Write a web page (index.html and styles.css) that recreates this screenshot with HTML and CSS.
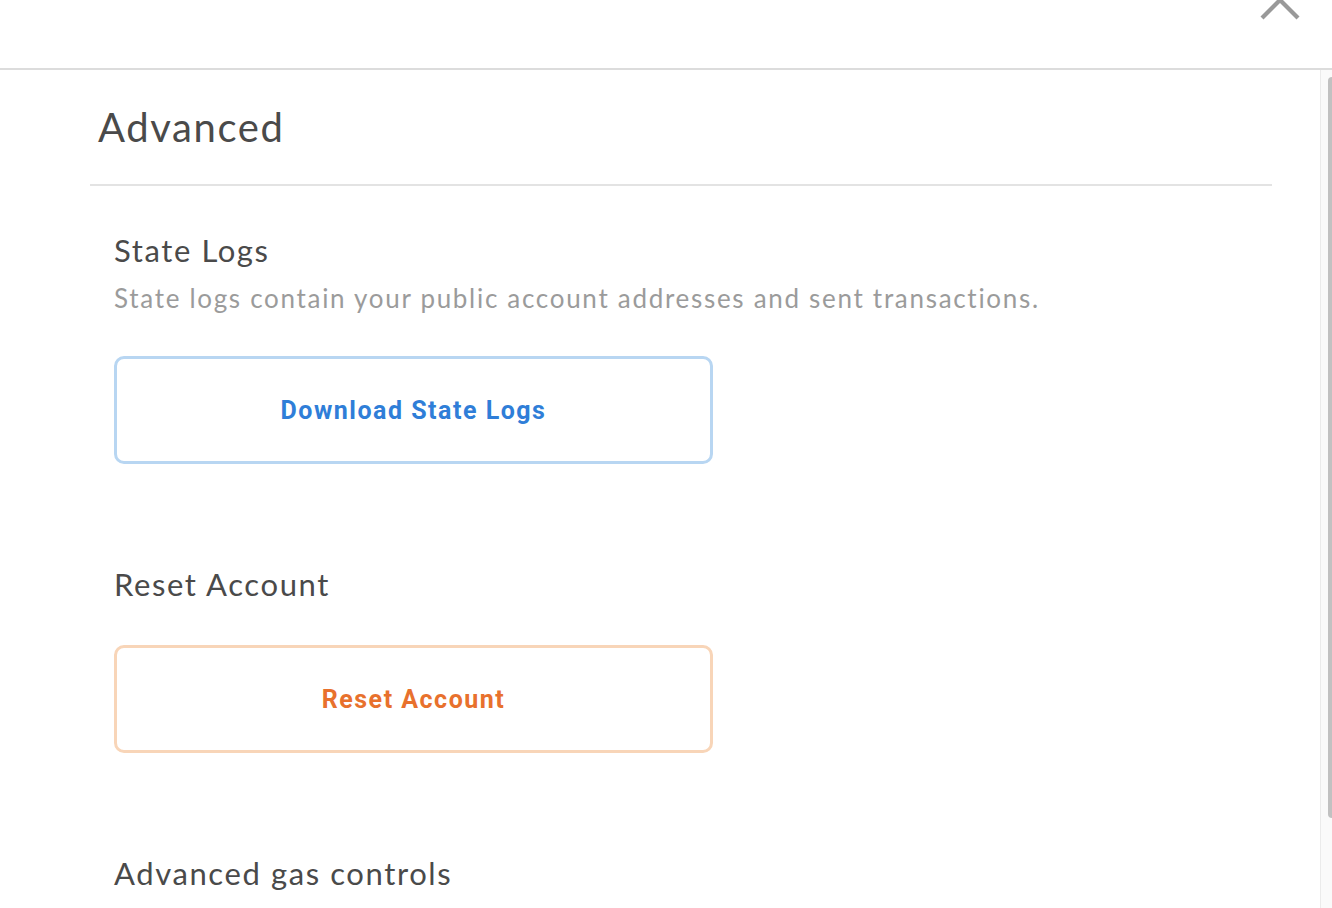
FILE: index.html
```html
<!DOCTYPE html>
<html lang="en">
<head>
<meta charset="utf-8">
<title>Advanced</title>
<link rel="stylesheet" href="styles.css">
</head>
<body>
<div class="header">
  <svg class="close" width="50" height="24" viewBox="1255 0 50 24" aria-hidden="true">
    <line x1="1262" y1="18" x2="1298" y2="-18" />
    <line x1="1298" y1="18" x2="1262" y2="-18" />
  </svg>
</div>
<div class="main">
  <div class="content">
    <div class="title-row">Advanced</div>
    <div class="section first">
      <h2 class="heading">State Logs</h2>
      <p class="desc">State logs contain your public account addresses and sent transactions.</p>
      <div class="btn btn-blue">Download State Logs</div>
    </div>
    <div class="section">
      <h2 class="heading">Reset Account</h2>
      <div class="btn btn-orange">Reset Account</div>
    </div>
    <div class="section">
      <h2 class="heading">Advanced gas controls</h2>
    </div>
  </div>
  <div class="scrollbar">
    <div class="thumb"></div>
  </div>
</div>
</body>
</html>
```

FILE: styles.css
```css
html, body {
  margin: 0;
  padding: 0;
  background: #ffffff;
  overflow: hidden;
}

body {
  font-family: Lato, "Noto Sans", sans-serif;
  color: #4a4a4a;
}

.header {
  position: relative;
  height: 68px;
  border-bottom: 2px solid #dcdcdc;
}

.close {
  position: absolute;
  left: 1255px;
  top: 0;
  stroke: #999999;
  stroke-width: 4.2;
  fill: none;
}

.main {
  display: flex;
  height: 838px;
  overflow: hidden;
}

.content {
  flex: 1;
  padding: 0 48px 0 90px;
}

.title-row {
  padding: 33px 0 33px 8px;
  font-size: 40px;
  line-height: 48px;
  letter-spacing: 1.6px;
  color: #4a4a4a;
  border-bottom: 2px solid #e3e3e3;
}

.section {
  padding-left: 24px;
  margin-top: 102px;
}

.section.first {
  margin-top: 46px;
}

.heading {
  margin: 0;
  font-weight: 400;
  font-size: 31px;
  line-height: 36px;
  letter-spacing: 1.6px;
  color: #4a4a4a;
}

.desc {
  margin: 15px 0 0;
  font-size: 26px;
  line-height: 30px;
  letter-spacing: 1.7px;
  color: #9b9b9b;
}

.btn {
  margin-top: 43px;
  box-sizing: border-box;
  width: 599px;
  height: 108px;
  border: 3px solid;
  border-radius: 10px;
  display: flex;
  align-items: center;
  justify-content: center;
  font-family: Roboto, "Liberation Sans", sans-serif;
  font-weight: 700;
  font-size: 25px;
  letter-spacing: 1.5px;
}

.btn-blue {
  border-color: #b8d6f2;
  color: #2f7ed8;
}

.btn-orange {
  border-color: #f8d5b8;
  color: #e8712d;
}

.scrollbar {
  width: 11px;
  border-left: 1px solid #ebebeb;
  background: #fafafa;
  padding-top: 7px;
  display: flex;
  flex-direction: column;
  align-items: flex-end;
}

.thumb {
  width: 4px;
  height: 741px;
  background: #c1c1c1;
  border-radius: 4px 0 0 4px;
}
```
